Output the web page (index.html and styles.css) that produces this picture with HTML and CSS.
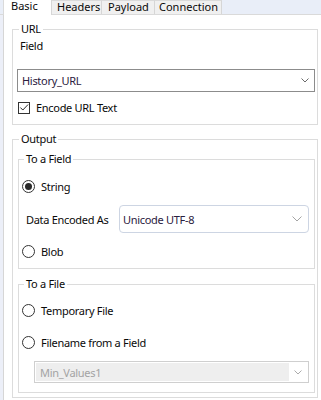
FILE: index.html
```html
<!DOCTYPE html>
<html>
<head>
<meta charset="utf-8">
<link rel="stylesheet" href="styles.css">
</head>
<body>
<div class="tabs">
  <div class="tab active">Basic</div>
  <div class="tab t-headers">Headers</div>
  <div class="tab t-payload">Payload</div>
  <div class="tab t-conn">Connection</div>
  <div class="tab-fill"></div>
</div>
<div class="page">
  <fieldset class="group url">
    <legend>URL</legend>
    <div class="body url-body">
      <div class="field-label">Field</div>
      <div class="select plain">
        <span class="value">History_URL</span>
        <svg class="chev" width="8" height="5" viewBox="0 0 8 5"><path d="M0.5 0.5 L4 4 L7.5 0.5" fill="none" stroke="#6a6a6a" stroke-width="1"/></svg>
      </div>
      <div class="check-row">
        <span class="checkbox"><svg width="11" height="11" viewBox="0 0 11 11"><path d="M1.5 5.5 L4.2 8.3 L10 2.2" fill="none" stroke="#2a2a2a" stroke-width="1.1"/></svg></span>
        <span class="text">Encode URL Text</span>
      </div>
    </div>
  </fieldset>
  <fieldset class="group output">
    <legend>Output</legend>
    <div class="body output-body">
      <fieldset class="group inner to-field">
        <legend>To a Field</legend>
        <div class="body inner-body">
          <div class="radio-row r-string"><span class="radio checked"></span><span class="text">String</span></div>
          <div class="enc-row">
            <span class="text enc-label">Data Encoded As</span>
            <div class="select rounded">
              <span class="value">Unicode UTF-8</span>
              <svg class="chev" width="10" height="6" viewBox="0 0 10 6"><path d="M0.5 0.5 L5 5 L9.5 0.5" fill="none" stroke="#a4a4a4" stroke-width="1"/></svg>
            </div>
          </div>
          <div class="radio-row r-blob"><span class="radio"></span><span class="text">Blob</span></div>
        </div>
      </fieldset>
      <fieldset class="group inner to-file">
        <legend>To a File</legend>
        <div class="body inner-body">
          <div class="radio-row r-temp"><span class="radio"></span><span class="text">Temporary File</span></div>
          <div class="radio-row r-fname"><span class="radio"></span><span class="text">Filename from a Field</span></div>
          <div class="select disabled">
            <span class="dis-fill"><span class="value">Min_Values1</span></span>
            <span class="drop"><svg class="chev" width="8" height="5" viewBox="0 0 8 5"><path d="M0.5 0.5 L4 4 L7.5 0.5" fill="none" stroke="#ababab" stroke-width="1"/></svg></span>
          </div>
        </div>
      </fieldset>
    </div>
  </fieldset>
</div>
</body>
</html>
```
FILE: styles.css
```css
html, body {
  margin: 0;
  padding: 0;
}
body {
  width: 321px;
  height: 400px;
  overflow: hidden;
  background: #eceff8;
  font-family: "Noto Sans", "Open Sans", sans-serif;
  font-size: 11px;
  color: #0a0a0a;
}
.tabs {
  display: flex;
  height: 15px;
  padding-left: 3px;
  background: #e9eef8;
  border-bottom: 1px solid #dadada;
  box-sizing: border-box;
}
.tab {
  box-sizing: border-box;
  height: 14px;
  line-height: 12px;
  background: #f0f0f0;
  border-top: 1px solid #dadada;
  border-right: 1px solid #d6d6d6;
  color: #0a0a0a;
  white-space: nowrap;
}
.tab.active {
  background: #ffffff;
  border-top: none;
  width: 49px;
  height: 15px;
  padding-left: 7px;
  line-height: 12px;
  margin-bottom: -1px;
  border-left: 1px solid #dadada;
}
.t-headers { width: 50px; padding-left: 5px; }
.t-payload { width: 53px; padding-left: 6px; }
.t-conn { width: 67px; padding-left: 4px; }
.tab-fill { flex: 1; }
.page {
  margin-left: 3px;
  border-left: 1px solid #d6d6d6;
  background: #ffffff;
  height: 385px;
  padding: 7px 3px 0 8px;
  box-sizing: border-box;
}
.text, .field-label, .value, legend {
  letter-spacing: -0.3px;
}
.group {
  margin: 0;
  padding: 0;
  border: 1px solid #dcdcdc;
  min-width: 0;
  box-sizing: border-box;
}
.group legend {
  padding: 0 2px;
  margin-left: 6px;
  line-height: 14px;
  height: 14px;
}
.url {
  height: 103px;
}
.url-body {
  padding: 0 2px 0 4px;
}
.field-label {
  margin-top: 2px;
  margin-left: 3px;
  line-height: 15px;
}
.select {
  display: flex;
  align-items: center;
  justify-content: space-between;
  box-sizing: border-box;
  border: 1px solid #8c8c8c;
  background: #fff;
}
.select .value {
  color: #2b2040;
}
.plain {
  margin-top: 16px;
  height: 23px;
  padding: 0 5px 0 4px;
}
.check-row {
  display: flex;
  align-items: center;
  height: 13px;
  margin-top: 9px;
  margin-left: 1px;
}
.checkbox {
  width: 12px;
  height: 12px;
  box-sizing: border-box;
  border: 1px solid #333;
  display: flex;
  align-items: center;
  justify-content: center;
  margin-right: 6px;
}
.output {
  margin-top: 7px;
  height: 266px;
}
.output-body {
  padding: 6px 2px 0 5px;
}
.inner legend {
  margin-left: 5px;
}
.inner-body {
  padding: 0 5px 0 3px;
}
.to-field {
  height: 117px;
}
.to-file {
  height: 116px;
  margin-top: 8px;
}
.radio-row {
  display: flex;
  align-items: center;
  height: 13px;
}
.radio {
  width: 13px;
  height: 13px;
  box-sizing: border-box;
  border: 1px solid #333;
  border-radius: 50%;
  margin-right: 6px;
  display: flex;
  align-items: center;
  justify-content: center;
}
.radio.checked::after {
  content: "";
  width: 7px;
  height: 7px;
  border-radius: 50%;
  background: #2a2a2a;
}
.r-string { margin-top: 14px; }
.enc-row {
  display: flex;
  align-items: center;
  margin-top: 12px;
  margin-left: 4px;
}
.enc-label { width: 93px; flex: none; }
.rounded {
  flex: 1;
  height: 28px;
  border: 1px solid #cdd5e3;
  border-radius: 4px;
  padding: 0 6px 0 3px;
}
.r-blob { margin-top: 12px; }
.r-temp { margin-top: 13px; }
.r-fname { margin-top: 19px; }
.disabled {
  margin: 12px 0 0 12px;
  height: 22px;
  border: 1px solid #cfcfcf;
  background: #ffffff;
  padding: 1px;
  align-items: stretch;
}
.dis-fill {
  flex: 1;
  background: #eeeeee;
  display: flex;
  align-items: center;
  padding-left: 4px;
}
.disabled .value {
  color: #a3a3a3;
}
.disabled .drop {
  width: 18px;
  display: flex;
  align-items: center;
  justify-content: center;
}
```
